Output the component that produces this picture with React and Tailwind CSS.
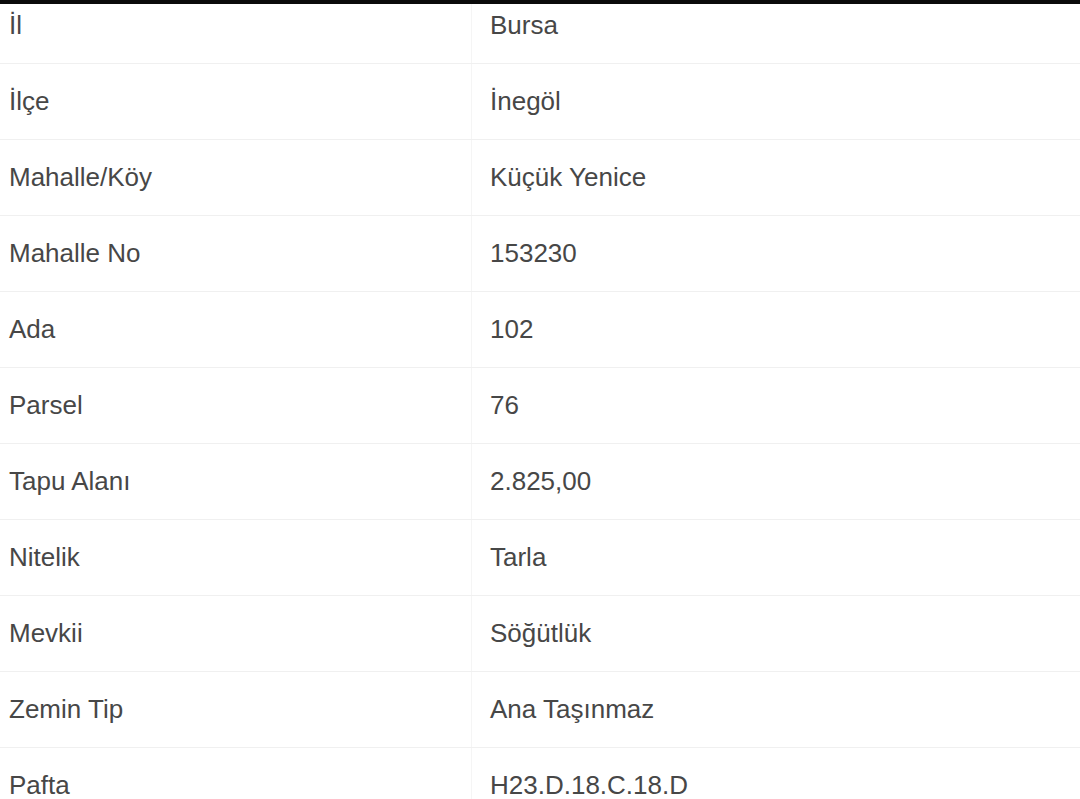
export default function App() {
  const rows = [
    ["İl", "Bursa"],
    ["İlçe", "İnegöl"],
    ["Mahalle/Köy", "Küçük Yenice"],
    ["Mahalle No", "153230"],
    ["Ada", "102"],
    ["Parsel", "76"],
    ["Tapu Alanı", "2.825,00"],
    ["Nitelik", "Tarla"],
    ["Mevkii", "Söğütlük"],
    ["Zemin Tip", "Ana Taşınmaz"],
    ["Pafta", "H23.D.18.C.18.D"],
  ];
  return (
    <div
      className="w-[1080px] h-[799px] bg-white overflow-hidden relative"
      style={{ fontFamily: '"Liberation Sans", Arial, sans-serif' }}
    >
      <div className="absolute top-0 left-0 right-0 h-[4px] bg-[#0a0a0a] z-10" />
      <div className="-mt-[12px] flex flex-col">
        {rows.map(([k, v], i) => (
          <div key={i} className="flex h-[76px] border-b border-[#f0f0f0]">
            <div className="w-[471px] pl-[9px] pt-[22px] text-[26px] leading-[30px] text-[#474747]">
              {k}
            </div>
            <div className="flex-1 border-l border-[#f5f5f5] pl-[18px] pt-[22px] text-[26px] leading-[30px] text-[#474747]">
              {v}
            </div>
          </div>
        ))}
      </div>
    </div>
  );
}
